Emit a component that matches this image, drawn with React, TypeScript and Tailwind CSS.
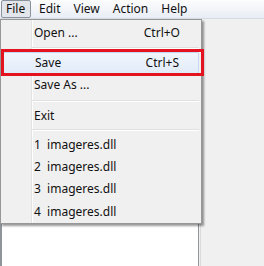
import React from 'react';

type Item =
  | { kind: 'item'; label: string; shortcut?: string; h: string; selected?: boolean }
  | { kind: 'sep'; h: string };

const items: Item[] = [
  { kind: 'item', label: 'Open ...', shortcut: 'Ctrl+O', h: 'h-[22px]' },
  { kind: 'sep', h: 'h-[8px]' },
  { kind: 'item', label: 'Save', shortcut: 'Ctrl+S', h: 'h-[22px]', selected: true },
  { kind: 'item', label: 'Save As ...', h: 'h-[22px]' },
  { kind: 'sep', h: 'h-[9px]' },
  { kind: 'item', label: 'Exit', h: 'h-[21px]' },
  { kind: 'sep', h: 'h-[8px]' },
  { kind: 'item', label: '1  imageres.dll', h: 'h-[22px]' },
  { kind: 'item', label: '2  imageres.dll', h: 'h-[22px]' },
  { kind: 'item', label: '3  imageres.dll', h: 'h-[22px]' },
  { kind: 'item', label: '4  imageres.dll', h: 'h-[23px]' },
];

const menus = ['File', 'Edit', 'View', 'Action', 'Help'];

export default function App() {
  return (
    <div
      className="relative w-[264px] h-[266px] overflow-hidden bg-[#f0f0f0] text-[12px] text-[#111]"
      style={{ fontFamily: '"Noto Sans", "Open Sans", sans-serif' }}
    >
      {/* menu bar */}
      <div className="flex h-[19px] items-center gap-[1px] border-b border-[#d5dbe5] bg-gradient-to-b from-[#fdfdfe] to-[#e8edf5] pl-[1px]">
        {menus.map((m, i) => (
          <div
            key={m}
            className={`flex h-[18px] items-center rounded-[2px] border ${
              i === 0 ? 'mr-[1px] w-[30px] border-[#8a929c] bg-[#e2e5ea] px-[4px]' : 'border-transparent px-[5px]'
            }`}
          >
            {m}
          </div>
        ))}
      </div>

      {/* window body below the menu */}
      <div className="flex h-[247px]">
        <div className="w-[199px] border-l-2 border-r border-[#8f949a] bg-white" />
        <div className="ml-[1px] w-[1px] bg-[#dadada]" />
        <div className="flex-1" />
      </div>

      {/* dropdown */}
      <div className="absolute left-0 top-[19px] w-[202px] border border-[#979797] bg-[#f0f0f0] pt-[2px] shadow-[2px_2px_2px_rgba(0,0,0,0.4)]">
        <div className="absolute bottom-0 left-[30px] top-0 w-[1px] bg-[#e2e3e3]" />
        <div className="absolute bottom-0 left-[31px] top-0 w-[1px] bg-white" />
        {items.map((it, idx) =>
          it.kind === 'sep' ? (
            <div key={idx} className={`${it.h} relative flex items-center pl-[31px] pr-[2px]`}>
              <div className="w-full">
                <div className="h-[1px] bg-[#e0e0e0]" />
                <div className="h-[1px] bg-white" />
              </div>
            </div>
          ) : (
            <div
              key={idx}
              className={`${it.h} relative mx-[2px] flex items-center justify-between pl-[31px] pr-[19px] ${
                it.selected ? 'rounded-[2px] border border-[#c5d9f2] bg-gradient-to-b from-[#f1f6fc] to-[#e1ebf8]' : ''
              }`}
            >
              <span className="whitespace-pre">{it.label}</span>
              {it.shortcut && <span>{it.shortcut}</span>}
            </div>
          )
        )}
      </div>

      {/* red annotation box */}
      <div className="absolute left-[1px] top-[49px] h-[27px] w-[203px] border-[3px] border-[#e3141f]" />
    </div>
  );
}
